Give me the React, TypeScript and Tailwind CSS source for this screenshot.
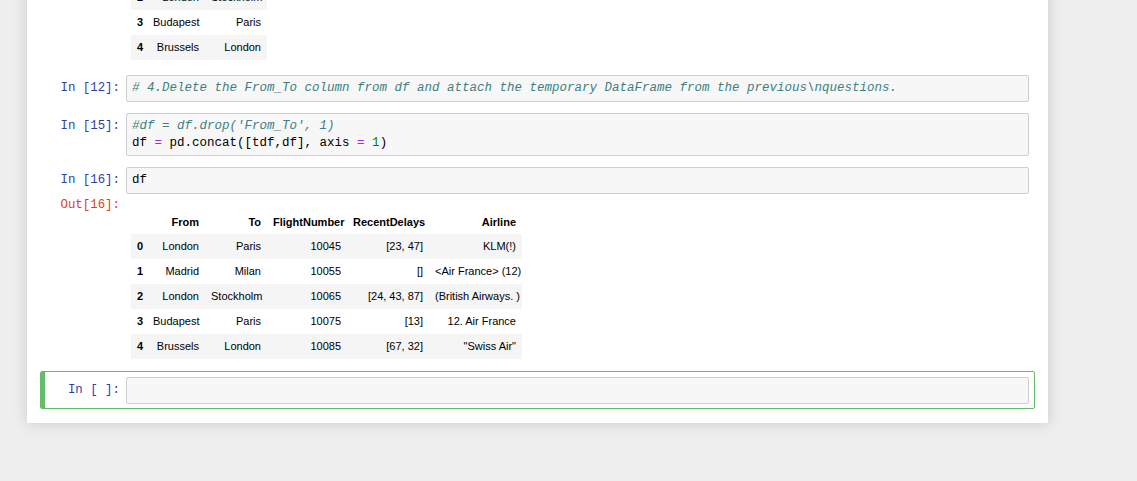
import React from 'react'

const mono = "font-['Liberation_Mono','DejaVu_Sans_Mono',monospace]"
const sans = "font-['Liberation_Sans',Arial,sans-serif]"

type Row = { idx: string; cells: string[] }

const topRows: Row[] = [
  { idx: '2', cells: ['London', 'Stockholm'] },
  { idx: '3', cells: ['Budapest', 'Paris'] },
  { idx: '4', cells: ['Brussels', 'London'] },
]

const dfRows: Row[] = [
  { idx: '0', cells: ['London', 'Paris', '10045', '[23, 47]', 'KLM(!)'] },
  { idx: '1', cells: ['Madrid', 'Milan', '10055', '[]', '<Air France> (12)'] },
  { idx: '2', cells: ['London', 'Stockholm', '10065', '[24, 43, 87]', '(British Airways. )'] },
  { idx: '3', cells: ['Budapest', 'Paris', '10075', '[13]', '12. Air France'] },
  { idx: '4', cells: ['Brussels', 'London', '10085', '[67, 32]', '"Swiss Air"'] },
]

const colWidths = ['w-[16px]', 'w-[58px]', 'w-[62px]', 'w-[80px]', 'w-[82px]', 'w-[93px]']

function Prompt({ text, out = false }: { text: string; out?: boolean }) {
  return (
    <div
      className={`w-[80px] shrink-0 whitespace-pre pr-[6px] text-right text-[12.4px] leading-[17px] ${mono} ${
        out ? 'pt-[3px] text-[#D84315]' : 'pt-[5px] text-[#303F9F]'
      }`}
    >
      {text}
    </div>
  )
}

function InputArea({ children }: { children?: React.ReactNode }) {
  return (
    <div
      className={`min-h-[27px] flex-1 whitespace-pre rounded-[2px] border border-[#cfcfcf] bg-[#f7f7f7] px-[5px] py-[4px] text-[12.5px] leading-[16.5px] text-black ${mono}`}
    >
      {children}
    </div>
  )
}

function DataTable({ rows, header, width }: { rows: Row[]; header?: string[]; width: string }) {
  const cols = rows[0].cells.length + 1
  return (
    <table className={`table-fixed border-collapse text-[11px] text-black ${width} ${sans}`}>
      <colgroup>
        {colWidths.slice(0, cols).map((w, i) => (
          <col key={i} className={w} />
        ))}
      </colgroup>
      {header && (
        <thead>
          <tr className="h-[34px]">
            <th />
            {header.map((h) => (
              <th key={h} className="whitespace-nowrap px-[6px] pb-[4px] text-right align-bottom font-bold">
                {h}
              </th>
            ))}
          </tr>
        </thead>
      )}
      <tbody>
        {rows.map((r) => (
          <tr key={r.idx} className={`h-[25px] ${Number(r.idx) % 2 === 0 ? 'bg-[#f5f5f5]' : 'bg-white'}`}>
            <th className="pl-[6px] text-left font-bold">{r.idx}</th>
            {r.cells.map((c, i) => (
              <td key={i} className="whitespace-nowrap px-[6px] text-right">
                {c}
              </td>
            ))}
          </tr>
        ))}
      </tbody>
    </table>
  )
}

function Cell({ children, selected = false }: { children: React.ReactNode; selected?: boolean }) {
  return (
    <div
      className={`flex flex-col rounded-[2px] border px-[5px] pt-[5px] pb-[4px] ${
        selected ? 'border-[#66BB6A] shadow-[inset_4px_0_0_#66BB6A]' : 'border-transparent'
      }`}
    >
      {children}
    </div>
  )
}

export default function App() {
  return (
    <div className="h-[481px] overflow-hidden bg-[#eeeeee]">
      <div className="ml-[27px] w-[1021px] bg-white px-[13px] pb-[14px] shadow-[0_0_12px_1px_rgba(87,87,87,0.2)]">
        {/* tail of the previous output, scrolled off the top */}
        <div className="-mt-[15px] flex pb-[9px] pl-[6px]">
          <div className="w-[80px] shrink-0" />
          <div className="pl-[5px]">
            <DataTable rows={topRows} width="w-[136px]" />
          </div>
        </div>

        <Cell>
          <div className="flex">
            <Prompt text="In [12]:" />
            <InputArea>
              <span className="italic text-[#408080]">
                # 4.Delete the From_To column from df and attach the temporary DataFrame from the previous\nquestions.
              </span>
            </InputArea>
          </div>
        </Cell>

        <Cell>
          <div className="flex">
            <Prompt text="In [15]:" />
            <InputArea>
              <span className="italic text-[#408080]">#df = df.drop('From_To', 1)</span>
              {'\n'}df <span className="text-[#AA22FF]">=</span> pd.concat([tdf,df], axis{' '}
              <span className="text-[#AA22FF]">=</span> <span className="text-[#008000]">1</span>)
            </InputArea>
          </div>
        </Cell>

        <Cell>
          <div className="flex">
            <Prompt text="In [16]:" />
            <InputArea>df</InputArea>
          </div>
          <div className="flex pb-[7px]">
            <Prompt text="Out[16]:" out />
            <div className="pl-[5px] pt-[6px]">
              <DataTable
                rows={dfRows}
                width="w-[391px]"
                header={['From', 'To', 'FlightNumber', 'RecentDelays', 'Airline']}
              />
            </div>
          </div>
        </Cell>

        <Cell selected>
          <div className="flex">
            <Prompt text="In [ ]:" />
            <InputArea />
          </div>
        </Cell>
      </div>
    </div>
  )
}
